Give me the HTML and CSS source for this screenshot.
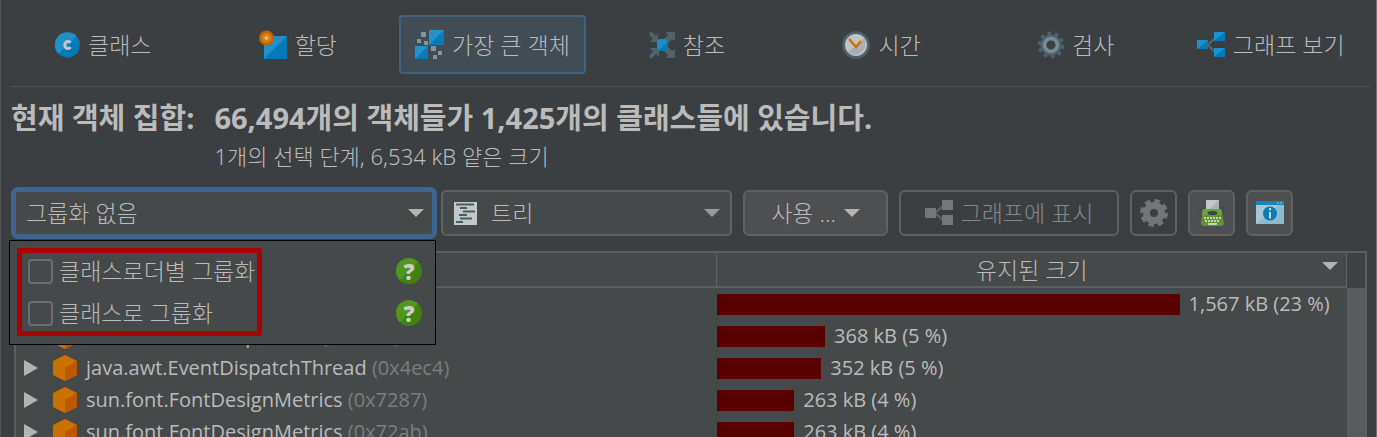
FILE: index.html
```
<!DOCTYPE html>
<html lang="ko">

<head>
  <meta charset="UTF-8">
  <meta name="viewport" content="width=device-width, initial-scale=1.0">
  <title>가장 큰 객체</title>
  <link rel="stylesheet" href="styles.css">
</head>

<body>
  <main class="window">
    <nav class="views">
      <button type="button" class="view">
        <svg class="icon" width="25" height="26" viewBox="0 0 25 26">
          <circle cx="12.500" cy="13" r="12.500" fill="#007ab8" />
          <path d="M3.500 22A12.500 12.500 0 0 1 21.500 4Z" fill="#2190c8" />
          <path d="M15.500 10.800A3.200 3.600 0 1 0 15.500 15.200" fill="none" stroke="#c4c4c4" stroke-width="3" />
        </svg>
        클래스
      </button>
      <button type="button" class="view">
        <svg class="icon" width="28" height="30" viewBox="0 0 28 30">
          <path d="M5 6H28V29H5Z" fill="#007ab8" />
          <path d="M5 6H28L5 29Z" fill="#2190c8" />
          <circle cx="7.500" cy="8" r="7.500" fill="#c46200" />
          <circle cx="7.500" cy="8" r="5" fill="#cf8510" />
          <circle cx="7.500" cy="8" r="2" fill="#d8bd80" />
        </svg>
        할당
      </button>
      <button type="button" class="view active">
        <svg class="icon" width="29" height="30" viewBox="0 0 29 30">
          <path d="M14 0H29V15H14ZM0 16H13V29H0Z" fill="#0a7bb9" />
          <path d="M14 0H29L14 15ZM0 16H13L0 29Z" fill="#2790c7" />
          <path d="M6 2H11V7H6ZM2 9H6V13H2ZM9 11H13V15H9ZM16 16H21V21H16ZM23 21H27V25H23ZM18 25H22V29H18Z" fill="#8495a0" />
        </svg>
        가장 큰 객체
      </button>
      <button type="button" class="view">
        <svg class="icon" width="26" height="28" viewBox="0 0 26 28">
          <g fill="#50636d">
            <path d="M2 0L7 5L9 2V11H1L4 8L0 3Z" />
            <path d="M2 28L7 23L10 26V17H1L4 20L0 25Z" />
            <path d="M26 1V10L23 8L18 13L14 9L19 4L17 1Z" />
            <path d="M26 27V18L23 20L18 15L14 19L19 24L17 27Z" />
          </g>
          <path d="M10 8H16L19 11V17L16 20H10L8 17V11Z" fill="#007ab8" />
          <path d="M10 8H16L19 11L10 19L8 17V11Z" fill="#1c8cc6" />
        </svg>
        참조
      </button>
      <button type="button" class="view">
        <svg class="icon" width="28" height="28" viewBox="0 0 28 28">
          <circle cx="14" cy="14" r="13.800" fill="#4b626d" />
          <circle cx="14" cy="14" r="11" fill="#c2c3c3" />
          <path d="M22 7A11 11 0 0 1 6 21.500Z" fill="#a8b0b1" />
          <path d="M7 8L14 16L19 10" fill="none" stroke="#c96f0a" stroke-width="2.400" />
        </svg>
        시간
      </button>
      <button type="button" class="view">
        <svg class="icon" width="26" height="28" viewBox="0 0 26 28">
          <circle cx="13" cy="14" r="11.500" fill="none" stroke="#4c626e" stroke-width="4" stroke-dasharray="3.600 3.600" />
          <circle cx="13" cy="14" r="7.500" fill="none" stroke="#4c626e" stroke-width="6" />
          <circle cx="13" cy="14" r="6.500" fill="none" stroke="#788991" stroke-width="3.500" />
        </svg>
        검사
      </button>
      <button type="button" class="view">
        <svg class="icon" width="28" height="28" viewBox="0 0 28 28">
          <path d="M19 6L11 14L19 22" fill="none" stroke="#59666c" stroke-width="2" />
          <path d="M0 9H11V18H0ZM17 1H28V10H17ZM17 17H28V26H17Z" fill="#007ab8" />
          <path d="M0 9H11L0 18ZM17 1H28L17 10ZM17 17H28L17 26Z" fill="#1c91cd" />
        </svg>
        그래프 보기
      </button>
    </nav>

    <section class="summary">
      <h1>현재 객체 집합:</h1>
      <h2>66,494개의 객체들가 1,425개의 클래스들에 있습니다.</h2>
      <p>1개의 선택 단계, 6,534 kB 얕은 크기</p>
    </section>

    <section class="toolbar">
      <div class="combo combo-group">
        <select aria-label="그룹화">
          <option>그룹화 없음</option>
        </select>
        <span class="arrow"></span>

        <div class="popup">
          <div class="option">
            <input type="checkbox" id="by-loader">
            <label for="by-loader">클래스로더별 그룹화</label>
            <button type="button" class="help" aria-label="도움말">?</button>
          </div>
          <div class="option">
            <input type="checkbox" id="by-class">
            <label for="by-class">클래스로 그룹화</label>
            <button type="button" class="help" aria-label="도움말">?</button>
          </div>
          <div class="marker"></div>
        </div>
      </div>
      <div class="combo combo-tree">
        <svg class="icon" width="23" height="23" viewBox="0 0 23 23">
          <path d="M0 0H23V23H0Z" fill="#c5c8c9" />
          <path d="M2 2.500H20M6 6H13M9 9.500H21M5 13H13M6 16.500H18M2 20H9" stroke="#465d66" stroke-width="2" />
        </svg>
        <select aria-label="보기">
          <option>트리</option>
        </select>
        <span class="arrow dim"></span>
      </div>
      <button type="button" class="btn btn-use">사용 ... <span class="arrow"></span></button>
      <button type="button" class="btn btn-graph" disabled>
        <svg class="icon" width="28" height="26" viewBox="0 0 28 26">
          <path d="M19 5L10 13L19 21" fill="none" stroke="#626567" stroke-width="2" />
          <path d="M0 8H11V18H0ZM17 0H28V10H17ZM17 15H28V25H17Z" fill="#737577" />
        </svg>
        그래프에 표시
      </button>
      <button type="button" class="btn btn-icon" aria-label="설정" disabled>
        <svg width="28" height="30" viewBox="0 0 28 30">
          <circle cx="14" cy="15" r="12" fill="none" stroke="#747577" stroke-width="4" stroke-dasharray="5.400 4.020" />
          <circle cx="14" cy="15" r="7.500" fill="none" stroke="#747577" stroke-width="7" />
        </svg>
      </button>
      <button type="button" class="btn btn-icon" aria-label="내보내기">
        <svg width="26" height="26" viewBox="0 0 26 26">
          <path d="M1 14V10L3 8H23L25 10V13" fill="none" stroke="#3c4d55" stroke-width="2" />
          <path d="M7 0H20V10H7Z" fill="#c2c6c8" />
          <path d="M20 0V10H10Z" fill="#a9b1b4" />
          <path d="M4 9H22L25 23Q25 26 22 26H5Q2 26 2 23Z" fill="#5f9431" />
          <path d="M4 9H22L23 15H3Z" fill="#719f3c" />
          <ellipse cx="13.500" cy="13" rx="5" ry="2" fill="#33474d" />
          <path d="M5 18H22M6 21H21" stroke="#c5d2b5" stroke-width="2" stroke-dasharray="2 1" />
          <path d="M9 24H18" stroke="#c5d2b5" stroke-width="2" />
        </svg>
      </button>
      <button type="button" class="btn btn-icon" aria-label="정보">
        <svg width="28" height="24" viewBox="0 0 28 24">
          <path d="M0 0H28V23H0Z" fill="#8fb9cc" />
          <path d="M0 4H23L0 23Z" fill="#a6c6d4" />
          <path d="M0 0H28V4H0Z" fill="#1485c0" />
          <path d="M21 2H23M24 2H26" stroke="#a6c6d4" />
          <circle cx="14" cy="12.500" r="7" fill="#087cb8" />
          <path d="M14 7V9.500M14 11V17.500" stroke="#d0d4d6" stroke-width="2" />
        </svg>
      </button>
    </section>

    <section class="tree">
      <table>
        <thead>
          <tr>
            <th class="col-name"></th>
            <th class="col-size">
              <div class="sort">유지된 크기<span class="arrow"></span></div>
            </th>
          </tr>
        </thead>
        <tbody>
          <tr>
            <td>
              <div class="object"><span class="expander"></span><svg class="cube" width="26" height="28"><use href="#cube" /></svg></div>
            </td>
            <td>
              <div class="size"><span class="bar" style="width: 73.4%"></span>1,567 kB (23 %)</div>
            </td>
          </tr>
          <tr>
            <td>
              <div class="object"><span class="expander"></span><svg class="cube" width="26" height="28"><use href="#cube" /></svg>sun.awt.EventDispatcher <small>(0x4ec1)</small></div>
            </td>
            <td>
              <div class="size"><span class="bar" style="width: 17.1%"></span>368 kB (5 %)</div>
            </td>
          </tr>
          <tr>
            <td>
              <div class="object"><span class="expander"></span><svg class="cube" width="26" height="28"><use href="#cube" /></svg>java.awt.EventDispatchThread <small>(0x4ec4)</small></div>
            </td>
            <td>
              <div class="size"><span class="bar" style="width: 16.5%"></span>352 kB (5 %)</div>
            </td>
          </tr>
          <tr>
            <td>
              <div class="object"><span class="expander"></span><svg class="cube" width="26" height="28"><use href="#cube" /></svg>sun.font.FontDesignMetrics <small>(0x7287)</small></div>
            </td>
            <td>
              <div class="size"><span class="bar" style="width: 12.2%"></span>263 kB (4 %)</div>
            </td>
          </tr>
          <tr>
            <td>
              <div class="object"><span class="expander"></span><svg class="cube" width="26" height="28"><use href="#cube" /></svg>sun.font.FontDesignMetrics <small>(0x72ab)</small></div>
            </td>
            <td>
              <div class="size"><span class="bar" style="width: 12.2%"></span>263 kB (4 %)</div>
            </td>
          </tr>
        </tbody>
      </table>
      <div class="scrollbar"></div>
    </section>
  </main>

  <svg class="symbols" width="0" height="0">
    <symbol id="cube" viewBox="0 0 26 28">
      <path d="M13 1L25 7V21L13 27L1 21V7Z" fill="#cb7100" />
      <path d="M25 7V21L13 27V14Z" fill="#bd5800" />
    </symbol>
  </svg>
</body>

</html>
```

FILE: styles.css
```
* {
  box-sizing: border-box;
  margin: 0;
  padding: 0;
}

body {
  font-family: "Open Sans", "Noto Sans CJK KR", sans-serif;
  font-size: 23px;
  line-height: 32px;
  font-weight: 300;
  color: #bbb;
  background-color: #3c3f41;
}

button,
select {
  font: inherit;
  color: inherit;
}

.window {
  display: flex;
  flex-direction: column;
  height: 100vh;
  overflow: hidden;
  border-left: 1px solid #54575a;
  border-right: 1px solid #65777c;
}

.icon {
  flex: none;
}

.arrow {
  flex: none;
  border: 8px solid transparent;
  border-top-color: #b4b4b4;
  border-bottom: none;
}

.arrow.dim {
  border-top-color: #979899;
}

/* views */

.views {
  display: grid;
  grid-template-columns: repeat(7, 1fr);
  gap: 8px;
  margin: 0 6px 0 9px;
  padding: 15px 6px 12px 0;
  border-bottom: 1px solid #515456;
}

.view {
  display: flex;
  align-items: center;
  justify-content: center;
  gap: 8px;
  height: 59px;
  border: 2px solid transparent;
  border-radius: 4px;
  background: none;
  white-space: nowrap;
}

.view.active {
  background-color: #414c54;
  border-color: #41637f;
}

/* summary */

.summary {
  display: grid;
  grid-template-columns: auto 1fr;
  column-gap: 20px;
  padding: 12px 10px 0;
}

.summary h1,
.summary h2 {
  font-size: 29px;
  line-height: 38px;
  font-weight: bold;
}

.summary p {
  grid-column: 2;
  font-family: "Noto Sans", "Noto Sans CJK KR", sans-serif;
  font-size: 22px;
  line-height: 38px;
}

/* toolbar */

.toolbar {
  display: flex;
  align-items: center;
  gap: 11px;
  padding: 12px 83px 12px 10px;
}

.combo {
  display: flex;
  align-items: center;
  position: relative;
  height: 46px;
  padding-right: 10px;
  border: 2px solid #5f6163;
  border-radius: 5px;
  background-color: #45494a;
}

.combo select {
  flex: 1;
  min-width: 0;
  height: 32px;
  padding-left: 12px;
  appearance: none;
  border: none;
  outline: none;
  background: none;
}

.combo-group {
  flex: 408;
  height: 52px;
  margin-right: -7px;
  border: 5px solid #3e6490;
  border-radius: 7px;
  padding-right: 8px;
}

.combo-group select {
  padding-left: 10px;
}

.combo-tree {
  flex: 266;
  padding-left: 11px;
}

.combo-tree select {
  padding-left: 14px;
}

.btn {
  display: flex;
  align-items: center;
  justify-content: center;
  gap: 8px;
  height: 46px;
  border: 2px solid #5f6163;
  border-radius: 6px;
  background-color: #4d4f51;
  white-space: nowrap;
}

.btn:disabled {
  background: none;
  color: #85878a;
}

.btn-use {
  flex: 0 0 145px;
}

.btn-graph {
  flex: 0 0 220px;
}

.btn-icon {
  flex: 0 0 47px;
}

/* popup */

.popup {
  position: absolute;
  z-index: 1;
  top: 48px;
  left: -7px;
  right: -4px;
  padding: 9px 13px 10px 18px;
  border: 1px solid #000;
  background-color: #45494a;
}

.option {
  display: flex;
  align-items: center;
  gap: 6px;
  height: 42px;
}

.option input {
  appearance: none;
  width: 25px;
  height: 25px;
  border: 2px solid #6b6d6f;
  border-radius: 4px;
}

.help {
  width: 26px;
  height: 26px;
  margin-left: auto;
  border: none;
  border-radius: 50%;
  background: linear-gradient(135deg, #51971b 50%, #408210 50%);
  color: #ccc;
  font-size: 22px;
  line-height: 26px;
  font-weight: 800;
}

.marker {
  position: absolute;
  top: 7px;
  left: 7px;
  width: 245px;
  height: 88px;
  border: 5px solid #a90000;
  pointer-events: none;
}

/* tree */

.tree {
  display: flex;
  flex: none;
  margin: 0 9px 0 13px;
  border: 2px solid #5b5e60;
  background-color: #45494a;
}

table {
  flex: 1;
  table-layout: fixed;
  border-collapse: separate;
  border-spacing: 0;
  font-size: 20px;
  font-weight: 400;
}

th {
  height: 35px;
  border-right: 1px solid #5f6264;
  border-bottom: 2px solid #5b5e60;
  font-size: 23px;
  font-weight: 300;
}

.col-name {
  width: 52.7%;
}

.sort {
  display: flex;
  align-items: center;
  justify-content: center;
  position: relative;
}

.sort .arrow {
  position: absolute;
  top: 8px;
  right: 8px;
}

td {
  height: 32px;
}

.object {
  display: flex;
  align-items: center;
  height: 32px;
  padding-left: 8px;
  white-space: pre;
}

.object small {
  font-size: 20px;
  color: #7b7d7f;
}

.expander {
  border: 8px solid transparent;
  border-left: 14px solid #b4b4b4;
  border-right: none;
}

.cube {
  margin: 0 8px 0 14px;
}

.size {
  display: flex;
  align-items: center;
  gap: 9px;
  height: 32px;
  white-space: nowrap;
}

.bar {
  height: 21px;
  background-color: #590000;
}

.scrollbar {
  width: 18px;
  border-top: 35px solid #3f4244;
  background-color: #585c5f;
}

.symbols {
  position: absolute;
}
```
